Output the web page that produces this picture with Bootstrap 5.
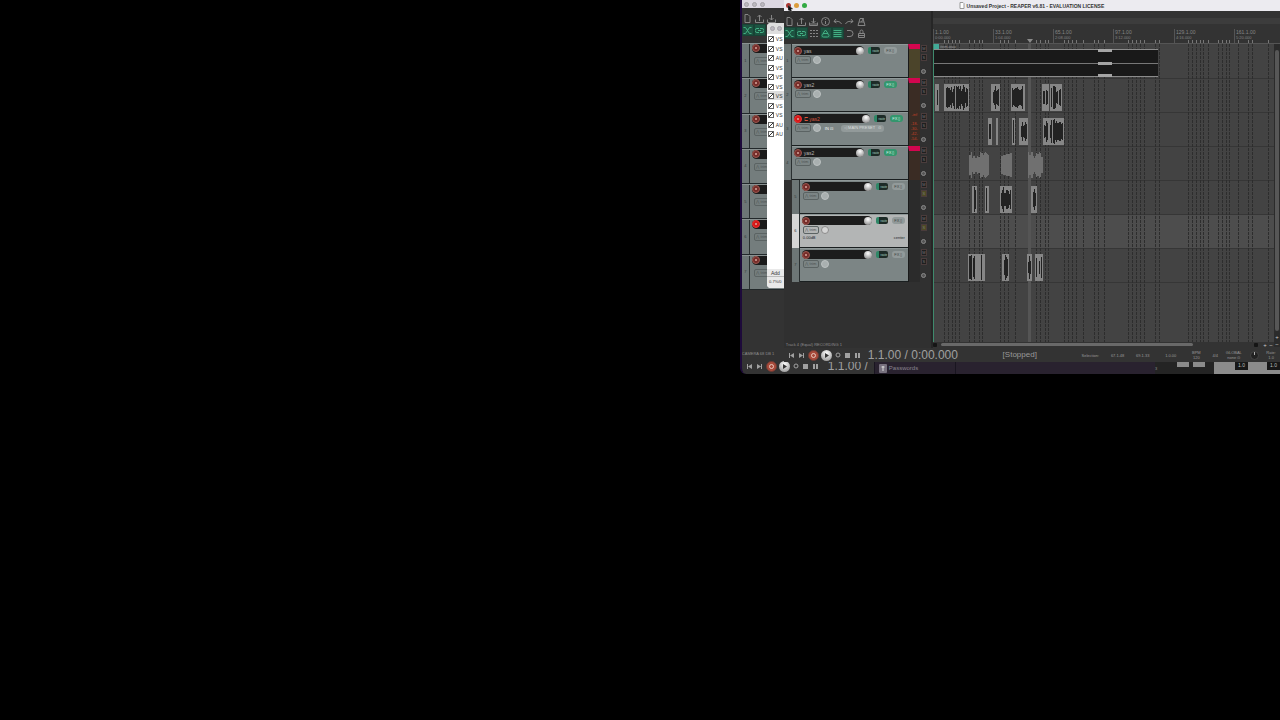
<!DOCTYPE html>
<html lang="en">
<head>
<meta charset="utf-8">
<meta name="viewport" content="width=device-width, initial-scale=1">
<title>Unsaved Project - REAPER v6.81</title>
<link href="https://cdn.jsdelivr.net/npm/bootstrap@5.3.0/dist/css/bootstrap.min.css" rel="stylesheet">
<style>
body{background:#000;font-family:"Liberation Sans",Arial,sans-serif;font-size:5px;line-height:6px;color:#8d8d8d}
button{background:none;border:0;padding:0;color:inherit;font-size:inherit;line-height:inherit;display:flex;align-items:center;justify-content:center;flex:none}
svg{display:block;flex:none}
.ico{fill:none;stroke:#858585;stroke-width:1}
.desk{width:42.2%;height:374px;background:#333;border-left:2px solid #1d0a3a;border-bottom-left-radius:6px}
.win-back{width:42px;top:0;left:0;bottom:0}
.title-back{height:8px;background:#dcd8e2;padding-left:2px;gap:3px}
.title-back i,.plug-head i{width:5px;height:5px;border-radius:50%;background:#bbb8bf;border:1px solid #a5a2a9}
.tools-back{height:35px;padding-top:4px}
.tool{width:12px;height:12px}
.tool svg{width:9px;height:9px}
.tool.lit{background:#1d5341;box-shadow:inset 0 0 0 1px #174335}
.tool.lit .ico{stroke:#43b084}
.tracks-back{height:247px;background:#747d7d}
.row-back{border-bottom:1px solid #22282a;border-top:1px solid #899191}
.gut{width:8px;background:#6d7676;border-right:1px solid #292f30;color:#343a3a;font-size:4px}
.rec{width:8px;height:8px;border-radius:50%;background:#762c29;border:1px solid #9d5850}
.rec::after{content:"";width:2px;height:2px;border-radius:50%;background:#d8a69c}
.rec.armed{background:#d51818;border-color:#e33}
.bar-b{background:#1b1b1b;height:9px;margin:0 0 0 2px;border-radius:5px 0 0 5px;width:20px}
.win-plug{left:25px;top:23px;width:17px;height:265px;background:#fff;border-radius:4px 0 0 4px;color:#333}
.plug-head{height:11px;background:#dedede;padding-left:3px;gap:2px}
.plug-row{height:9px;margin-bottom:1px;padding-left:1px;gap:2px}
.plug-list .plug-row:nth-child(2n){margin-bottom:0}
.plug-row.sel{background:#dcdcdc}
.plug-row input{appearance:none;width:6px;height:6px;margin:0;border:1px solid #666;flex:none;background:linear-gradient(135deg,#fff 40%,#333 40% 60%,#fff 60%)}
.plug-foot{height:19px;background:#e9e9e9;padding-top:1px}
.plug-foot button{width:100%;height:7px;border-bottom:1px solid #bbb}
.win-main{left:42px;right:0;top:0;height:362px;background:#333}
.title-main{height:11px;background:#ecebf0;color:#333;font-weight:bold;padding-left:2px;padding-right:24px;box-shadow:0 1px #191919}
.light{width:5px;height:5px;border-radius:50%}
.rail{width:147px;background:#303030}
.tools{height:33px;padding-top:4px}
.trk{height:34px}
.face{background:#7c8585;border-top:1px solid #8f9898;border-bottom:1px solid #1a1f20;width:116px}
.line1{margin:1px 0 0 2px;gap:4px}
.line2{margin:1px 0 0 3px;gap:4px}
.nest{padding-left:8px}
.nest .face{width:108px}
.trk.sel .face{background:#b3b5b5}
.trk.sel .gut{background:#d6d6d6}
.namebar{height:9px;width:70px;background:#1c1c1c;border-radius:5px;color:#b5b5b5}
.armedbar{width:76px}
.armedbar .nm{color:#d8553e}
.nest .namebar{width:70px}
.knob{width:8px;height:8px;border-radius:50%;background:radial-gradient(circle at 50% 30%,#fff,#777)}
.pan{width:8px;height:8px;border-radius:50%;background:#a9b0b0;border:1px solid #bcc2c2}
.nest .pan{margin-left:-2px}
.line2 .pan{margin-left:-2px}
.sel .pan{background:#d4d4d4;border-color:#8c8c8c}
.chip{width:12px;height:7px;background:linear-gradient(90deg,#2f8767 25%,#1d2b27 25%);color:#a8d8c5;border-radius:2px;font-size:3px}
.fx{width:13px;height:7px;background:#929a9a;color:#3d4444;border-radius:3px;font-size:4px}
.fx.on{background:#34966d;color:#d6f5e8}
.env{width:16px;height:8px;border:1px solid #5b6363;border-radius:2px;color:#4b5252;font-size:4px}
.preset{background:#929a9a;border-radius:3px;color:#dadddd;height:7px;font-size:4px;padding:0 3px}
.mtr{width:12px;background:#2b2b2b;border-left:1px solid #1a1a1a;color:#c44027;font-size:4px;line-height:5px}
.mtr.pk{border-top:5px solid #d3064f}
.mtr.olive{background:#4b442a}
.mtr.brown{background:#3a2c24}
.side{width:11px;padding:1px 0 0 1px;color:#777;font-size:4px}
.side button{width:6px;height:7px;background:#1f1f1f;border:1px solid #4a3c3c;margin-bottom:2px}
.side .dot{width:5px;height:5px;border-radius:50%;border:1px solid #8a8a8a;background:#555;margin-top:8px}
.side .y{background:#4d4a24}
.arr{min-width:0;border-left:2px solid #262626;background:#333}
.lane-strip{height:6px;margin-top:7px;background:#3c3c3c}
.ruler{height:20px;border-bottom:1px solid #555}
.lanes{background:#434343;height:298px}
.hscroll{height:5px;background:#333}
.hscroll i{height:3px;width:74%;background:#696969;border-radius:2px;margin-left:4px}
.hscroll button,.vscroll button{width:6px;height:5px;color:#c8c8c8;font-size:6px}
.vscroll button{height:7px}
.hscroll .end{background:#151515;width:4px;height:4px;border-radius:1px}
.vscroll{width:6px;background:#2b2b2b}
.vscroll i{width:4px;background:#575757;border-radius:2px;margin:6px 1px 2px}
.tport{height:14px;color:#999}
.clock{font-size:12px;line-height:14px;color:#a0a0a0;white-space:nowrap}
.tb{width:10px;height:10px;color:#999}
.tb svg{fill:#a0a0a0}
.round{width:11px;height:11px;border-radius:50%;margin:0 1px}
.round.red{background:#a94b3b;border:1px solid #6d3a33}
.round.white{background:radial-gradient(circle at 50% 30%,#fff,#888)}
.tiny{font-size:4px;line-height:5px;white-space:nowrap}
.under{left:3px;right:0;bottom:0;height:16px}
.under .clock{margin-left:3px}
.tport .clock{margin-left:1px}
.note-back{width:42px;margin-top:61px}
.note-main{margin:60px 0 0 2px}
.pw{left:132px;right:125px;bottom:0;height:12px;background:#29222f;color:#8a8490;border-left:1px solid #191520;gap:2px}
.pw span{font-size:6px}
.pw::after{content:"";position:absolute;left:80px;top:0;bottom:0;width:1px;background:#191520}
.mix{width:125px;right:0;bottom:0;height:12px;background:#242424}
.mix b{display:block;background:#8b8b8b}
.mix .lcd{background:#171717;color:#bbb;font-size:5px;font-weight:normal;width:13px;height:8px;text-align:center}
.ptr{left:46px;top:5px}
</style>
</head>
<body>
<main class="desk position-relative overflow-hidden ms-auto">
  <section class="win-back position-absolute">
    <div class="title-back d-flex align-items-center"><i></i><i></i><i></i></div>
    <div class="tools-back d-flex flex-wrap align-content-start">
      <button class="tool" aria-label="New"><svg class="ico" viewBox="0 0 9 9"><path d="M2 .5h3l2 2v6H2z"/></svg></button>
      <button class="tool" aria-label="Open"><svg class="ico" viewBox="0 0 9 9"><path d="M.5 5.500v3h8v-3M4.500 7V1M2.500 3l2-2 2 2"/></svg></button>
      <button class="tool" aria-label="Save"><svg class="ico" viewBox="0 0 9 9"><path d="M.5 5.500v3h8v-3M4.500 1v5M2.500 4l2 2 2-2"/></svg></button>
      <button class="tool lit" aria-label="Crossfade"><svg class="ico" viewBox="0 0 9 9"><path d="M.5 1.500h2l4 6h2M.5 7.500h2l4-6h2"/></svg></button>
      <button class="tool lit" aria-label="Grouping"><svg class="ico" viewBox="0 0 9 9"><path d="M4 2.500H2a2 2 0 000 4h2M5 2.500h2a2 2 0 010 4H5M3 4.500h3"/></svg></button>
    </div>
    <div class="tracks-back d-flex flex-column" id="back"></div>
    <div class="tiny note-back">CAMERA 68 DB 1</div>
  </section>

  <div class="under position-absolute d-flex align-items-center" id="tp-back"></div>
  <div class="pw position-absolute d-flex align-items-center ps-1"><svg width="8" height="9"><rect width="8" height="9" rx="1" fill="#77717e"/><path d="M4 2v5M2.500 3h3" stroke="#ddd"/></svg><span>Passwords</span></div>
  <div class="mix position-absolute d-flex align-items-start">
    <span class="tiny pt-1 me-3">3</span>
    <b style="width:12px;height:5px" class="ms-1 me-1"></b><b style="width:12px;height:5px"></b>
    <b class="ms-auto d-flex justify-content-end pe-1" style="width:38px;height:12px"><span class="lcd">1.0</span></b>
    <b class="d-flex justify-content-end" style="width:28px;height:12px"><span class="lcd">1.0</span></b>
  </div>

  <section class="win-plug position-absolute overflow-hidden d-flex flex-column">
    <div class="plug-head d-flex align-items-center"><i></i><i></i></div>
    <div class="plug-list flex-grow-1" id="plugs"></div>
    <div class="plug-foot"><button>Add</button><div class="tiny text-center" style="padding-top:2px">0.7%/0</div></div>
  </section>

  <section class="win-main position-absolute d-flex flex-column">
    <header class="title-main d-flex align-items-center">
      <span class="d-flex" style="gap:3px"><i class="light" style="background:#a93631"></i><i class="light" style="background:#dc9d3c"></i><i class="light" style="background:#32aa43"></i></span>
      <span class="mx-auto d-flex align-items-center" style="gap:2px"><svg width="6" height="7"><path d="M1 .5h3l1 1v5H1z" fill="#fff" stroke="#999"/></svg>Unsaved Project - REAPER v6.81 - EVALUATION LICENSE</span>
    </header>
    <div class="d-flex flex-grow-1">
      <div class="rail flex-shrink-0">
        <div class="tools"><div class="d-flex" id="t1"></div><div class="d-flex" id="t2"></div></div>
        <div id="tracks"></div>
        <div class="tiny note-main">Track 4 (Equal) RECORDING 1</div>
      </div>
      <div class="arr flex-grow-1 d-flex flex-column">
        <div class="lane-strip"></div>
        <svg class="ruler w-100" id="ruler"></svg>
        <div class="d-flex">
          <div class="flex-grow-1 overflow-hidden"><svg class="lanes w-100" id="lanes"></svg>
          <div class="hscroll d-flex align-items-center"><button class="end" aria-label="Scroll left"></button><i></i><button class="end ms-auto me-1" aria-label="Scroll right"></button><button aria-label="Zoom in">+</button><button aria-label="Zoom out">−</button></div></div>
          <div class="vscroll d-flex flex-column"><i class="flex-grow-1"></i><button aria-label="Taller">+</button><button aria-label="Shorter">−</button></div>
        </div>
      </div>
    </div>
    <footer class="tport d-flex align-items-center">
      <div class="d-flex align-items-center" style="padding-left:3px" id="tp-main"></div>
      <div class="flex-grow-1 text-center" style="font-size:8px;line-height:14px">[Stopped]</div>
      <div class="tiny d-flex align-items-center justify-content-between" style="width:40%">
        <span>Selection:</span><span class="ps-1">67.1.48</span><span class="px-1">69.1.33</span><span class="px-1">1.0.00</span>
        <span class="text-center px-1">BPM<br>120</span><span>4/4</span><span class="text-center">GLOBAL<br>none ⊙</span>
        <svg width="9" height="9"><circle cx="4.500" cy="4.500" r="4" fill="#222" stroke="#444"/><path d="M4.500 1v3" stroke="#aaa"/></svg>
        <span class="text-center pe-1">Rate:<br>1.0</span>
      </div>
    </footer>
  </section>
  <svg class="ptr position-absolute" width="6" height="8"><path d="M0 0l5 4H3l1 3-2-1-2-1z" fill="#111" stroke="#777" stroke-width=".4"/></svg>
</main>
<script src="https://cdn.jsdelivr.net/npm/bootstrap@5.3.0/dist/js/bootstrap.bundle.min.js"></script>
<script>
const el = id => document.getElementById(id);
const icon = d => `<svg class="ico" viewBox="0 0 9 9"><path d="${d}"/></svg>`;
const tool = ([name, d, lit]) => `<button class="tool${lit ? ' lit' : ''}" aria-label="${name}">${icon(d)}</button>`;
el('t1').innerHTML = [
  ['New', 'M2 .5h3l2 2v6H2z'],
  ['Open', 'M.5 5.5v3h8v-3M4.5 7V1M2.5 3l2-2 2 2'],
  ['Save', 'M.5 5.500v3h8v-3M4.5 1v5M2.5 4l2 2 2-2M1 7h7'],
  ['Info', 'M4.5 .5a4 4 0 100 8 4 4 0 000-8M4.5 2v1M4.5 4v3'],
  ['Undo', 'M8.500 7Q7 3.500 1 4.500M3 2L1 4.500 3.500 6'],
  ['Redo', 'M.5 7Q2 3.500 8 4.500M6 2l2 2.500L5.500 6'],
  ['Metronome', 'M3 1.500h3l2 7H1zM2 5h5M4.500 5l2-4']
].map(tool).join('');
el('t2').innerHTML = [
  ['Crossfade', 'M.5 1.500h2l4 6h2M.5 7.500h2l4-6h2', 1],
  ['Group', 'M4 2.500H2a2 2 0 000 4h2M5 2.500h2a2 2 0 010 4H5M3 4.500h3', 1],
  ['Grid', 'M1 1.500h2M4 1.500h2M7 1.500h2M1 4.500h2M4 4.500h2M7 4.500h2M1 7.500h2M4 7.500h2M7 7.500h2'],
  ['Ripple', 'M4.500 1L2 4.500h5zM2.500 5a1.500 1.500 0 100 3h4a1.500 1.500 0 100-3', 1],
  ['Snap', 'M.5 1.500h8M.5 3.500h8M.5 5.500h8M.5 7.500h8', 1],
  ['Magnet', 'M2 1.500h3a3 3 0 010 6H2'],
  ['Lock', 'M1.500 4.500h6v4h-6zM3 4V2.500a1.500 1.500 0 013 0V4M2 6.500h5']
].map(tool).join('');

el('back').innerHTML = [0,0,0,0,0,1,0].map((armed, i) => `
  <div class="row-back d-flex flex-fill"><div class="gut d-flex align-items-center justify-content-center">${i + 1}</div>
  <div><div class="bar-b d-flex"><button class="rec${armed ? ' armed' : ''}" aria-label="Record arm"></button></div>
  <button class="env mt-1 ms-1">⋀ trim</button></div></div>`).join('');

el('plugs').innerHTML = ['VS','VS','AU','VS','VS','VS','VS','VS','VS','AU','AU'].map((t, i) =>
  `<label class="plug-row d-flex align-items-center${i === 6 ? ' sel' : ''}"><input type="checkbox" checked>${t}</label>`).join('');

const tracks = [
  {name: 'yas', meter: 'pk olive'}, {name: 'yas2', meter: 'pk brown', fx: 1},
  {name: 'yas2', armed: 1, meter: 'brown', fx: 1, db: 1}, {name: 'yas2', meter: 'pk brown', fx: 1},
  {nest: 1, y: 1}, {nest: 1, sel: 1, y: 1}, {nest: 1}
];
el('tracks').innerHTML = tracks.map((t, i) => `
  <div class="trk d-flex${t.nest ? ' nest' : ''}${t.sel ? ' sel' : ''}">
    <div class="gut d-flex align-items-center justify-content-center">${i + 1}</div>
    <div class="face">
      <div class="line1 d-flex align-items-center">
        <div class="namebar d-flex align-items-center flex-shrink-0${t.armed ? ' armedbar' : ''}">
          <button class="rec${t.armed ? ' armed' : ''}" aria-label="Record arm"></button>
          <span class="nm" style="padding-left:2px">${t.armed ? '⊏ ' : ''}${t.name || ''}</span>
          <button class="knob ms-auto" aria-label="Volume"></button>
        </div>
        <button class="chip ps-1">route</button><button class="fx${t.fx ? ' on' : ''}">FX ▯</button>
      </div>
      <div class="line2 d-flex align-items-center">
        <button class="env">⋀ trim</button><button class="pan" aria-label="Pan"></button>
        ${t.armed ? '<span class="tiny text-light">IN ⊡</span><button class="preset ms-1">◁ MAIN PRESET &nbsp; ⊙</button>' : ''}
      </div>
      ${t.sel ? '<div class="d-flex justify-content-between tiny text-dark" style="padding:1px 3px"><span>0.00dB</span><span>center</span></div>' : ''}
    </div>
    <div class="mtr text-center ${t.meter || ''}">${t.db ? '-inf<div class="pt-1">-18-<br>-30-<br>-42-<br>-54-</div>' : ''}</div>
    <div class="side"><button>M</button><button class="${t.y ? 'y' : ''}">S</button><button class="dot" aria-label="Phase"></button></div>
  </div>`).join('');

const transport = t => `
  <button class="tb" aria-label="Start"><svg width="5" height="5"><path d="M0 0h1v5H0zM5 0v5L1 2.500z"/></svg></button>
  <button class="tb" aria-label="End"><svg width="5" height="5"><path d="M4 0h1v5H4zM0 0v5l4-2.500z"/></svg></button>
  <button class="round red" aria-label="Record"><svg width="5" height="5"><circle cx="2.500" cy="2.500" r="2" fill="none" stroke="#e8c6bd"/></svg></button>
  <button class="round white" aria-label="Play"><svg width="5" height="5"><path d="M1 0v5l4-2.500z" fill="#333"/></svg></button>
  <button class="tb" aria-label="Repeat"><svg width="6" height="6"><circle cx="3" cy="3" r="2" fill="none" stroke="#a0a0a0"/></svg></button>
  <button class="tb" aria-label="Stop"><svg width="5" height="5"><path d="M0 0h5v5H0z"/></svg></button>
  <button class="tb" aria-label="Pause"><svg width="5" height="5"><path d="M0 0h2v5H0zM3 0h2v5H3z"/></svg></button>
  <span class="clock ps-1">${t}</span>`;
el('tp-main').innerHTML = transport('1.1.00 / 0:00.000');
el('tp-back').innerHTML = transport('1.1.00 /');

// Timeline: x is measured from the left edge of the arrange view, y from the top of track 1.
const rect = (x, y, w, h, f) => `<rect x="${x}" y="${y}" width="${w}" height="${h}" fill="${f}"/>`;
const grid = [11,15,19,22,26,36,41,46,49,67,71,75,82,103,107,112,115,131,135,139,143,150,161,165,171,195,199,203,207,211,222,226,255,259,263,267,270,275,285,289,293,296,305,315,319,335];
let r = '';
[['1.1.00','0:00.000'],['33.1.00','1:04.000'],['65.1.00','2:08.000'],['97.1.00','3:12.000'],['129.1.00','4:16.000'],['161.1.00','5:20.000']].forEach(([a, b], i) => {
  const x = i * 60 + (i > 3 ? 1 : 0);
  r += rect(x, 5, 1, 14, '#555') + `<text x="${x + 2}" y="10" font-size="5" fill="#858585">${a}</text><text x="${x + 2}" y="15" font-size="4" fill="#858585">${b}</text>`;
});
grid.forEach(x => r += rect(x, 16, 1, 3, '#777'));
r += '<path d="M94 15h6l-3 4z" fill="#8b8b8b"/>';
el('ruler').innerHTML = r;

let seed = 7;
const rnd = () => (seed = (seed * 16807) % 2147483647) / 2147483647;
let s = '';
for (let i = 1; i < 8; i++) s += rect(0, i * 34, 400, 1, '#363636');
s += rect(0, 171, 400, 33, '#4d4d4d');
grid.forEach(x => s += `<path d="M${x}.500 0v298" stroke="#2d2d2d" stroke-dasharray="3 1"/>`);
s += rect(95, 0, 3, 298, '#555');
s += rect(0, 5, 225, 28, '#191919') + rect(0, 5, 225, 1, '#8b8b8b') + rect(0, 19, 225, 1, '#777') + rect(0, 32, 225, 1, '#8b8b8b');
[5, 18, 30].forEach(y => s += rect(165, y, 14, 3, '#a5a5a5'));
s += rect(0, 0, 6, 5, '#43aa98') + '<text x="7" y="4" font-size="4" fill="#999">item.wav</text>';
const clips = [[1, [[2,4],[11,25],[58,9],[78,14],[109,7],[117,12]]], [2, [[55,4],[63,2],[79,3],[86,9],[110,21]]],
  [4, [[39,5],[52,4],[67,12],[98,6]]], [6, [[35,17],[69,7],[94,5],[102,8]]]];
clips.forEach(([row, list]) => list.forEach(([x, w]) => {
  const top = row * 34 + 6;
  s += rect(x, top, w, 27, '#868686');
  for (let i = 1; i < w - 1; i++) {
    if (rnd() < .22) continue;
    const h = 11 + Math.round(rnd() * 7) * 2;
    s += rect(x + i, top + Math.round((27 - h) / 2), 1, h, '#222');
  }
}));
[[36,20],[68,11],[95,15]].forEach(([x, w]) => {
  for (let i = 0; i < w; i++) {
    const h = 14 + Math.round(rnd() * 6) * 2;
    s += rect(x + i, 121 - h / 2, 1, h, '#707070');
  }
});
s += rect(0, 0, 1, 298, '#3f8a6d');
el('lanes').innerHTML = s;
</script>
</body>
</html>
